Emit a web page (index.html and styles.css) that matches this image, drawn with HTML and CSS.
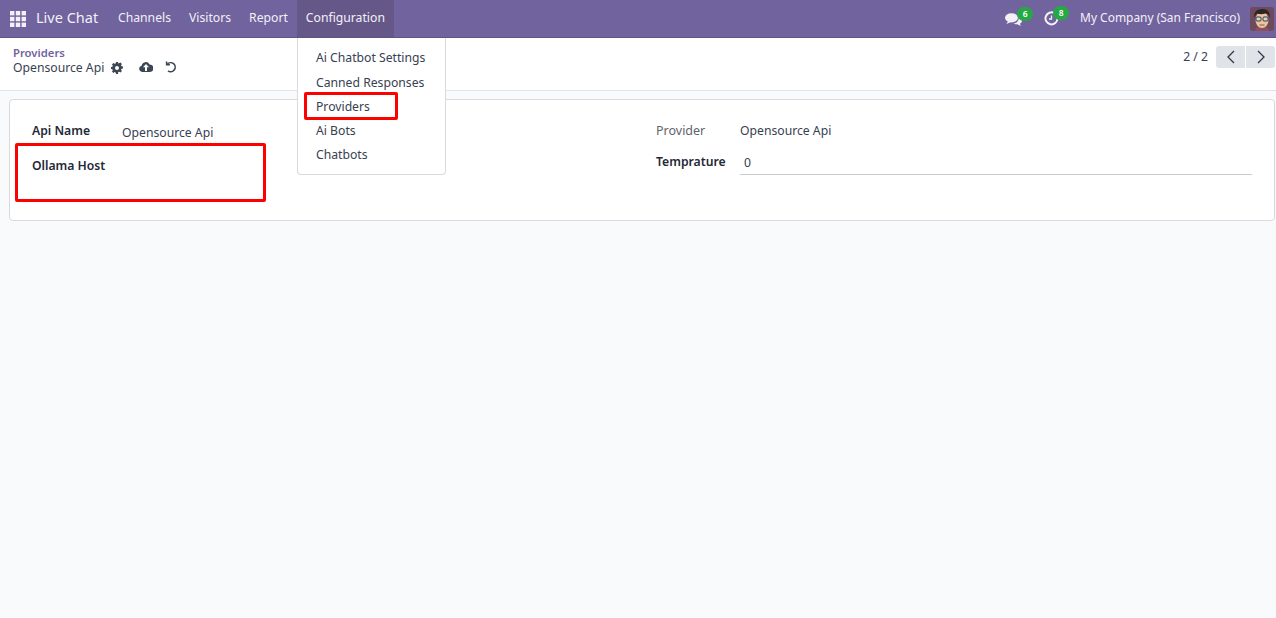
FILE: index.html
```html
<!DOCTYPE html>
<html lang="en">
<head>
    <meta charset="UTF-8">
    <title>Opensource Api - Live Chat</title>
    <link rel="stylesheet" href="styles.css">
</head>
<body>
    <header class="navbar">
        <a class="apps" href="#">
            <svg width="16" height="16" viewBox="0 0 16 16" fill="#f3f1f7">
                <rect x="0" y="0" width="4.4" height="4.4"/><rect x="5.8" y="0" width="4.4" height="4.4"/><rect x="11.6" y="0" width="4.4" height="4.4"/>
                <rect x="0" y="5.8" width="4.4" height="4.4"/><rect x="5.8" y="5.8" width="4.4" height="4.4"/><rect x="11.6" y="5.8" width="4.4" height="4.4"/>
                <rect x="0" y="11.6" width="4.4" height="4.4"/><rect x="5.8" y="11.6" width="4.4" height="4.4"/><rect x="11.6" y="11.6" width="4.4" height="4.4"/>
            </svg>
        </a>
        <a class="brand" href="#">Live Chat</a>
        <nav class="menu">
            <a href="#">Channels</a>
            <a href="#">Visitors</a>
            <a href="#">Report</a>
            <a class="open" href="#">Configuration</a>
        </nav>
        <div class="systray">
            <span class="tray-icon chat">
                <svg width="17" height="13" viewBox="0 0 17 13" fill="#f3f1f7">
                    <ellipse cx="6.5" cy="4.8" rx="6.5" ry="4.6"/>
                    <path d="M3 8l-1.500 3 4.500-2z"/>
                    <path d="M13.800 4.500c1.900.7 3.200 1.900 3.200 3.300 0 1.300-.9 2.300-2.200 3l1.200 2.200-3.800-1.700c-1.300 0-2.600-.3-3.600-.9 3-.2 5.500-2.500 5.200-5.900z"/>
                </svg>
                <span class="badge">6</span>
            </span>
            <span class="tray-icon clock">
                <svg width="15" height="15" viewBox="0 0 15 15" fill="none" stroke="#f3f1f7">
                    <path d="M10.500 2.200A6 6 0 1 0 13.500 7.500" stroke-width="2"/>
                    <path d="M7.500 4.500v3.500h-2.500" stroke-width="1.300"/>
                </svg>
                <span class="badge">8</span>
            </span>
            <span class="company">My Company (San Francisco)</span>
            <span class="avatar">
                <svg width="24" height="24" viewBox="0 0 24 24">
                    <rect width="24" height="24" rx="3" fill="#6d4a5e"/>
                    <path d="M5 24c0-3 3-5 7-5s7 2 7 5z" fill="#8e4f5f"/>
                    <ellipse cx="12" cy="13" rx="6.5" ry="8" fill="#eec3a0"/>
                    <path d="M4.500 11c-1.500-6 3-9 8-9 5 0 8 3 7 9-.5-3-2-4.500-4-4.500-3 1-6 1-8.500 0-1 1-2 2-2.500 4.500z" fill="#2b2526"/>
                    <g fill="#cfd6d6" stroke="#3a3a3a" stroke-width="1">
                        <rect x="6" y="10" width="5" height="4" rx="1"/>
                        <rect x="13" y="10" width="5" height="4" rx="1"/>
                    </g>
                    <path d="M9.500 18h5" stroke="#8c5a4a" stroke-width="1"/>
                </svg>
            </span>
        </div>
    </header>

    <div class="dropdown">
        <a href="#">Ai Chatbot Settings</a>
        <a href="#">Canned Responses</a>
        <a href="#">Providers</a>
        <a href="#">Ai Bots</a>
        <a href="#">Chatbots</a>
    </div>

    <div class="control-panel">
        <div class="breadcrumb">
            <a class="parent" href="#">Providers</a>
            <div class="current">
                <span>Opensource Api</span>
                <svg class="gear" width="12" height="12" viewBox="0 0 12 12" fill="#3d4653">
                    <path fill-rule="evenodd" d="M5 0h2l.3 1.500 1-.4 1.200-.6 1.400 1.400-.8 1.300.4 1 1.500.3v2l-1.500.3-.4 1 .8 1.300-1.400 1.400-1.300-.8-1 .4L7 12H5l-.3-1.500-1-.4-1.300.8L1 9.500l.8-1.300-.4-1L0 7V5l1.400-.3.4-1L1 2.400 2.400 1l1.300.8 1-.4zM6 4a2 2 0 1 0 0 4 2 2 0 0 0 0-4z"/>
                </svg>
                <svg class="save" width="14" height="11" viewBox="0 0 14 11" fill="#3d4653">
                    <path fill-rule="evenodd" d="M3.500 11A3.200 3.200 0 0 1 2.600 4.700 4.200 4.200 0 0 1 10.500 3.400 3.800 3.800 0 0 1 10.700 11zM7 3L4 6.300h2V10h2V6.300h2z"/>
                </svg>
                <svg class="discard" width="12" height="12" viewBox="0 0 12 12" fill="none" stroke="#3d4653" stroke-width="1.600">
                    <path d="M2.300 3.200A4.500 4.500 0 1 1 3 9.800"/>
                    <path d="M1.600.5v3.300h3.300" stroke-width="1.500"/>
                </svg>
            </div>
        </div>
        <div class="pager">
            <span class="pager-value">2 / 2</span>
            <div class="pager-buttons">
                <button type="button">
                    <svg width="8" height="14" viewBox="0 0 8 14" fill="none" stroke="#2f3845" stroke-width="1.300"><path d="M7 1L1 7l6 6"/></svg>
                </button>
                <button type="button">
                    <svg width="8" height="14" viewBox="0 0 8 14" fill="none" stroke="#2f3845" stroke-width="1.300"><path d="M1 1l6 6-6 6"/></svg>
                </button>
            </div>
        </div>
    </div>

    <main class="content">
        <div class="sheet">
            <div class="group left-group">
                <div class="row name-row">
                    <label class="strong">Api Name</label>
                    <span class="value">Opensource Api</span>
                </div>
                <div class="row host-row">
                    <label class="strong">Ollama Host</label>
                </div>
            </div>
            <div class="group right-group">
                <div class="row provider-row">
                    <label class="muted">Provider</label>
                    <span class="value">Opensource Api</span>
                </div>
                <div class="row temp-row">
                    <label class="strong">Temprature</label>
                    <span class="value input">0</span>
                </div>
            </div>
        </div>
    </main>

    <!-- annotation boxes drawn on the screenshot -->
    <div class="mark mark-providers"></div>
    <div class="mark mark-host"></div>
</body>
</html>
```

FILE: styles.css
```css
* {
    box-sizing: border-box;
}

html, body {
    height: 100%;
}

body {
    margin: 0;
    font-family: "Noto Sans", "Open Sans", sans-serif;
    font-size: 12.2px;
    color: #374151;
    background-color: #f9fafb;
    display: flex;
    flex-direction: column;
    overflow: hidden;
}

a {
    color: inherit;
    text-decoration: none;
}

/* top bar */
.navbar {
    height: 38px;
    flex-shrink: 0;
    display: flex;
    align-items: stretch;
    background-color: #71639e;
    border-bottom: 1px solid #5f5485;
    color: #f3f1f7;
}

.apps {
    display: flex;
    align-items: center;
    padding-left: 10px;
    width: 36px;
}

.brand {
    display: flex;
    align-items: center;
    font-size: 14.5px;
    width: 73px;
    padding-bottom: 3px;
}

.menu {
    display: flex;
}

.menu a {
    display: flex;
    align-items: center;
    padding: 0 9px 2px;
}

.menu a.open {
    background-color: #655889;
}

.systray {
    margin-left: auto;
    display: flex;
    align-items: center;
}

.tray-icon {
    position: relative;
    display: flex;
}

.tray-icon.chat {
    margin-right: 22px;
    margin-top: 1px;
}

.tray-icon.clock {
    margin-right: 21px;
}

.badge {
    position: absolute;
    width: 16px;
    height: 14px;
    border-radius: 7px;
    background-color: #28a745;
    color: #fff;
    font-size: 8.5px;
    font-weight: 600;
    line-height: 14px;
    text-align: center;
}

.chat .badge {
    top: -6px;
    left: 12px;
}

.clock .badge {
    top: -5px;
    left: 9px;
}

.company {
    margin-right: 10px;
    font-size: 11.95px;
    padding-bottom: 2px;
}

.avatar {
    display: flex;
    margin-right: 2px;
}

/* dropdown of the Configuration menu */
.dropdown {
    position: absolute;
    top: 38px;
    left: 297px;
    width: 149px;
    height: 137px;
    padding-top: 7px;
    background-color: #fff;
    border: 1px solid #d8dadd;
    border-top: none;
    border-radius: 0 0 4px 4px;
    z-index: 5;
}

.dropdown a {
    display: block;
    height: 24px;
    line-height: 25px;
    padding-left: 18px;
}

.dropdown a:first-child {
    height: 25px;
}

/* breadcrumb and pager */
.control-panel {
    height: 53px;
    flex-shrink: 0;
    display: flex;
    justify-content: space-between;
    background-color: #fff;
    border-bottom: 1px solid #e2e4ea;
}

.breadcrumb {
    padding: 7px 0 0 13px;
}

.parent {
    display: block;
    color: #71639e;
    font-size: 11.3px;
    font-weight: 600;
    line-height: 15px;
}

.current {
    display: flex;
    align-items: center;
    height: 15px;
}

.gear {
    margin-left: 7px;
}

.save {
    margin-left: 16px;
    margin-bottom: 2px;
}

.discard {
    margin-left: 12px;
    margin-bottom: 1px;
}

.pager {
    display: flex;
    align-items: flex-start;
    padding-top: 8px;
}

.pager-value {
    line-height: 22px;
    margin-right: 8px;
}

.pager-buttons {
    display: flex;
    gap: 1px;
    margin-right: 1px;
}

.pager-buttons button {
    width: 29px;
    height: 22px;
    padding: 0;
    display: flex;
    align-items: center;
    justify-content: center;
    border: none;
    background-color: #e0e3e7;
}

.pager-buttons button:first-child {
    border-radius: 3px 0 0 3px;
}

.pager-buttons button:last-child {
    border-radius: 0 3px 3px 0;
}

/* form sheet */
.content {
    flex-grow: 1;
    padding: 8px 1px 0 9px;
}

.sheet {
    height: 122px;
    display: flex;
    background-color: #fff;
    border: 1px solid #d8dadd;
    border-radius: 4px;
    padding-top: 21px;
}

.group {
    display: flex;
    flex-direction: column;
}

.left-group {
    width: 646px;
    padding-left: 22px;
}

.right-group {
    flex-grow: 1;
    padding-right: 22px;
}

.row {
    display: flex;
    line-height: 20px;
}

.row label {
    flex-shrink: 0;
}

.left-group label {
    width: 90px;
}

.right-group label {
    width: 84px;
}

.strong {
    font-weight: 600;
    color: #1f2937;
}

.muted {
    font-size: 12.5px;
    color: #5f636a;
}

.name-row .value {
    padding-top: 2px;
}

.host-row {
    margin-top: 13px;
}

.temp-row {
    margin-top: 11px;
}

.input {
    flex-grow: 1;
    height: 23px;
    padding: 1px 0 0 4px;
    border-bottom: 1px solid #c9ccd2;
}

/* red marks */
.mark {
    position: absolute;
    border: 3px solid #f00;
    border-radius: 2px;
    z-index: 10;
}

.mark-providers {
    top: 92px;
    left: 304px;
    width: 94px;
    height: 28px;
}

.mark-host {
    top: 143px;
    left: 15px;
    width: 251px;
    height: 59px;
}
```
